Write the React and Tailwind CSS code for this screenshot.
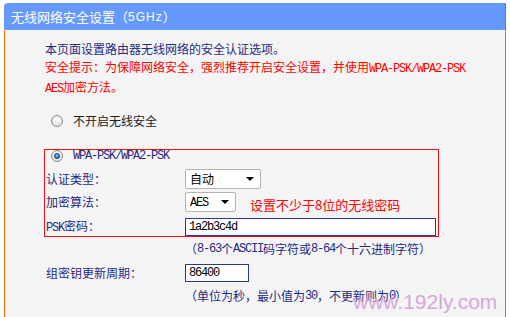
import React from "react";

const M = ({ children }) => (
  <span className="font-['Liberation_Mono',monospace] tracking-[-1.2px]">{children}</span>
);

const Radio = ({ checked }) => (
  <span className="w-[12px] h-[12px] shrink-0 rounded-full border border-[#8c8c8c] bg-[radial-gradient(circle_at_50%_35%,#ffffff,#d6d6d6)] flex items-center justify-center">
    {checked && (
      <span className="w-[6px] h-[6px] rounded-full bg-[radial-gradient(circle_at_40%_35%,#8fd0ff,#0b4f9c)] border border-[#0a3a78]" />
    )}
  </span>
);

const Select = ({ value, width }) => (
  <div
    className={`h-[20px] bg-white border border-[#b4b4b4] rounded-[2px] flex items-center justify-between pl-[4px] pr-[6px] text-black ${width}`}
  >
    <span>{value}</span>
    <span className="w-0 h-0 border-l-[4px] border-r-[4px] border-t-[4px] border-l-transparent border-r-transparent border-t-black" />
  </div>
);

export default function App() {
  return (
    <div className="w-[510px] h-[317px] bg-white pt-[3px] pl-[4px] overflow-hidden font-['Noto_Sans_CJK_SC',sans-serif] text-[12px]">
      <div className="w-[502px] h-[314px] flex flex-col">
        <div className="h-[27px] shrink-0 bg-[#6699ff] rounded-tl-[4px] border-r border-[#4a78e8] flex items-center pl-[7px] text-white text-[13px] leading-none">
          无线网络安全设置（<span className="font-['Liberation_Sans',sans-serif] text-[12px] tracking-[1px]">5GHz</span>）
        </div>
        <div className="relative flex-1 bg-[#f4f4f4] border-l border-r border-[#ff6600] pl-[40px] pt-[10px] text-[#1f2a85] leading-[18px] whitespace-nowrap">
          <p>本页面设置路由器无线网络的安全认证选项。</p>
          <p className="text-[#ff0000]">
            安全提示：为保障网络安全，强烈推荐开启安全设置，并使用<M>WPA-PSK/WPA2-PSK</M>
            <br />
            <M>AES</M>加密方法。
          </p>

          <div className="mt-[14px] h-[18px] flex items-center pl-[6px] gap-[10px] text-[#222]">
            <Radio />
            <span>不开启无线安全</span>
          </div>

          <div className="relative mt-[19px] -ml-[1px] w-[395px] border border-[#ee1111]">
            <div className="h-[12px] flex items-center pl-[6px] gap-[10px]">
              <Radio checked />
              <M>WPA-PSK/WPA2-PSK</M>
            </div>
            <div className="mt-[7px] h-[20px] flex items-center">
              <span className="w-[140px] pl-[1px]">认证类型：</span>
              <Select value="自动" width="w-[76px]" />
            </div>
            <div className="mt-[3px] h-[20px] flex items-center">
              <span className="w-[140px] pl-[1px]">加密算法：</span>
              <Select value={<M>AES</M>} width="w-[51px]" />
            </div>
            <div className="mt-[6px] h-[18px] flex items-center">
              <span className="w-[140px] pl-[1px]">
                <M>PSK</M>密码：
              </span>
              <div className="w-[251px] h-[18px] bg-white border border-[#2b3894] flex items-center pl-[3px] text-black">
                <M>1a2b3c4d</M>
              </div>
            </div>
            <span className="absolute left-[205px] top-[47px] text-[13px] leading-[16px] text-[#ff0000]">
              设置不少于8位的无线密码
            </span>
          </div>

          <div className="mt-[3px] h-[18px] pl-[140px] flex items-center">
            （<M>8-63</M>个<M>ASCII</M>码字符或<M>8-64</M>个十六进制字符）
          </div>

          <div className="mt-[6px] h-[18px] flex items-center">
            <span className="w-[140px] pl-[1px]">组密钥更新周期：</span>
            <div className="w-[64px] h-[18px] bg-white border border-[#2b3894] flex items-center pl-[3px] text-black">
              <M>86400</M>
            </div>
          </div>

          <div className="mt-[5px] h-[18px] pl-[140px] flex items-center">
            （单位为秒，最小值为<M>30</M>，不更新则为<M>0</M>）
          </div>

          <span className="absolute left-[348px] top-[261px] font-['Liberation_Sans',Arial,sans-serif] text-[21px] leading-none text-[#d8a6d9]">
            www.192ly.com
          </span>
        </div>
      </div>
    </div>
  );
}
